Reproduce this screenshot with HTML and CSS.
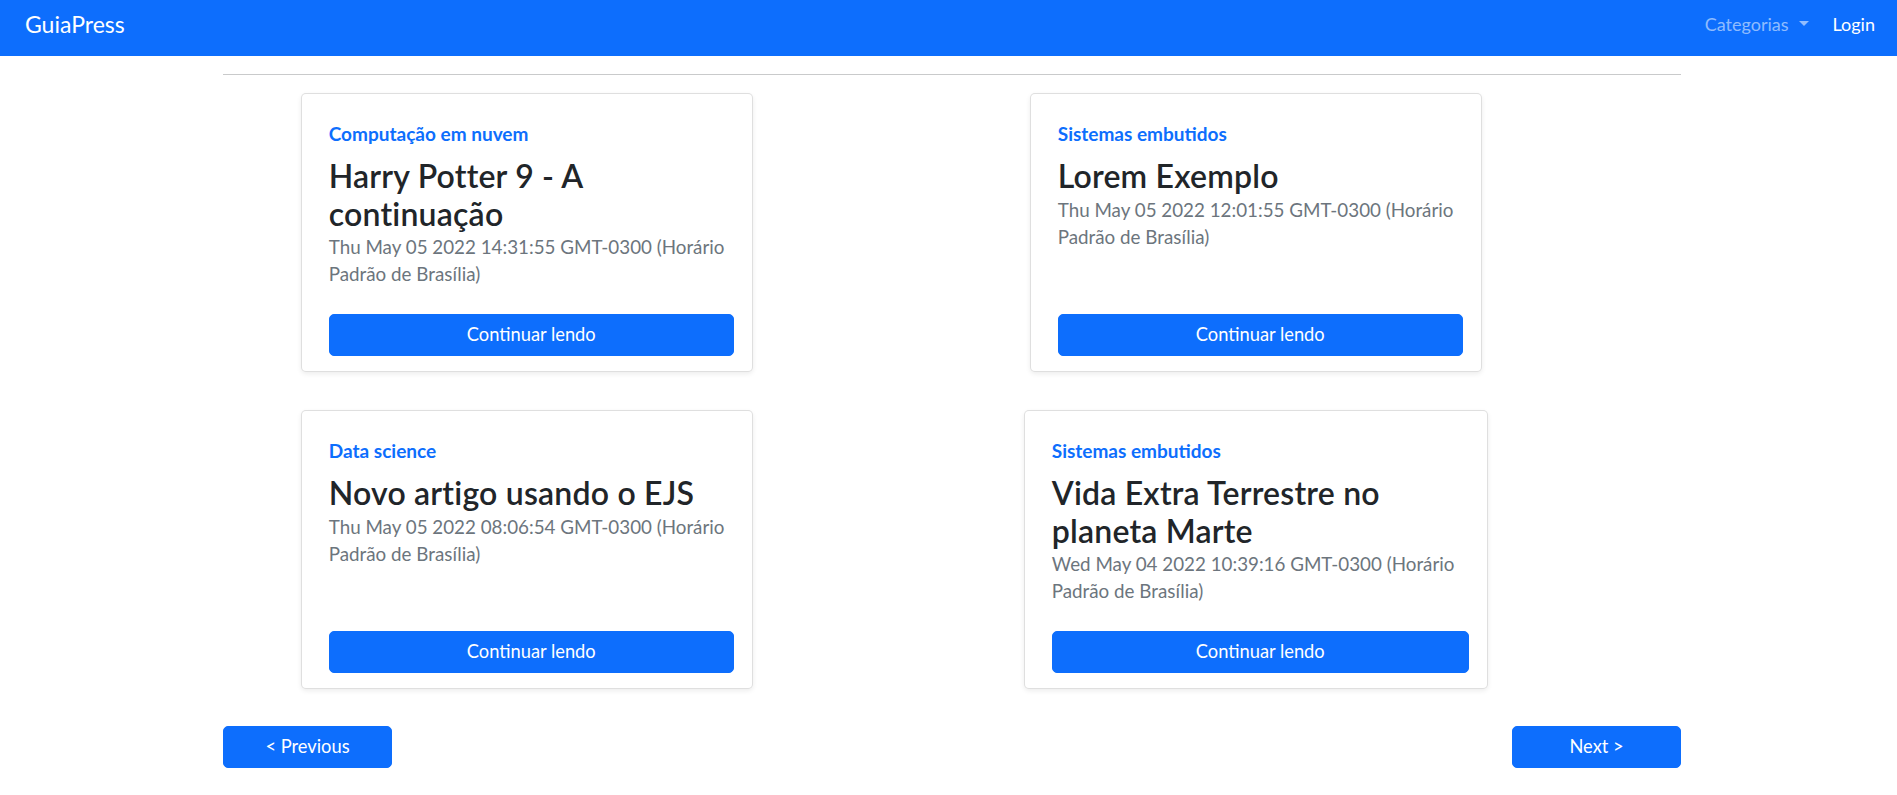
FILE: index.html
```html
<!DOCTYPE html>
<html lang="pt-BR">
<head>
<meta charset="utf-8">
<title>GuiaPress</title>
<link rel="stylesheet" href="styles.css">
</head>
<body>
<nav class="navbar">
  <a class="brand" href="#">GuiaPress</a>
  <ul class="nav-list">
    <li class="nav-item"><a class="nav-link nav-link-muted" href="#">Categorias<span class="caret"></span></a></li>
    <li class="nav-item"><a class="nav-link nav-link-login" href="#">Login</a></li>
  </ul>
</nav>
<main class="container">
  <hr class="divider">
  <div class="card-grid">
    <article class="card">
      <div class="card-category">Computação em nuvem</div>
      <h3 class="card-title">Harry Potter 9 - A continuação</h3>
      <p class="card-date">Thu May 05 2022 14:31:55 GMT-0300 (Horário Padrão de Brasília)</p>
      <a class="btn btn-block" href="#">Continuar lendo</a>
    </article>
    <article class="card">
      <div class="card-category">Sistemas embutidos</div>
      <h3 class="card-title">Lorem Exemplo</h3>
      <p class="card-date">Thu May 05 2022 12:01:55 GMT-0300 (Horário Padrão de Brasília)</p>
      <a class="btn btn-block" href="#">Continuar lendo</a>
    </article>
    <article class="card">
      <div class="card-category">Data science</div>
      <h3 class="card-title">Novo artigo usando o EJS</h3>
      <p class="card-date">Thu May 05 2022 08:06:54 GMT-0300 (Horário Padrão de Brasília)</p>
      <a class="btn btn-block" href="#">Continuar lendo</a>
    </article>
    <article class="card card-wide">
      <div class="card-category">Sistemas embutidos</div>
      <h3 class="card-title">Vida Extra Terrestre no planeta Marte</h3>
      <p class="card-date">Wed May 04 2022 10:39:16 GMT-0300 (Horário Padrão de Brasília)</p>
      <a class="btn btn-block" href="#">Continuar lendo</a>
    </article>
  </div>
  <div class="pager">
    <a class="btn btn-pager" href="#">&lt; Previous</a>
    <a class="btn btn-pager" href="#">Next &gt;</a>
  </div>
</main>
</body>
</html>
```

FILE: styles.css
```css
* {
  box-sizing: border-box;
}

html, body {
  margin: 0;
  padding: 0;
  background: #ffffff;
}

body {
  font-family: Lato, "Open Sans", sans-serif;
  color: #212529;
  font-size: 19px;
  line-height: 1.5;
}

a {
  text-decoration: none;
}

/* ---------- navbar ---------- */
.navbar {
  display: flex;
  justify-content: space-between;
  align-items: flex-start;
  height: 56px;
  padding: 0 22px 0 25px;
  background: #0d6efd;
}

.brand {
  padding-top: 6px;
  font-size: 23px;
  line-height: 36px;
  color: #ffffff;
}

.nav-list {
  display: flex;
  margin: 0;
  padding: 11px 0 0 0;
  list-style: none;
}

.nav-link {
  display: block;
  font-size: 18px;
  line-height: 26px;
  color: #ffffff;
}

.nav-link-muted {
  color: rgba(255, 255, 255, 0.55);
}

.nav-link-login {
  margin-left: 24px;
}

.caret {
  display: inline-block;
  margin-left: 10px;
  vertical-align: 0.255em;
  border-top: 5px solid rgba(255, 255, 255, 0.55);
  border-left: 5px solid transparent;
  border-right: 5px solid transparent;
}

/* ---------- main ---------- */
.container {
  width: 1458px;
  margin-left: 223px;
}

.divider {
  margin: 18px 0 0 0;
  border: 0;
  border-top: 1px solid #c9cacb;
  height: 0;
}

.card-grid {
  display: grid;
  grid-template-columns: 607.5px 607.5px;
  column-gap: 121.5px;
  row-gap: 38px;
  margin-top: 18px;
}

.card {
  justify-self: center;
  display: flex;
  flex-direction: column;
  width: 452px;
  padding: 26px 18px 15px 27px;
  background: #ffffff;
  border: 1px solid rgba(0, 0, 0, 0.125);
  border-radius: 5px;
  box-shadow: 0 2px 5px rgba(0, 0, 0, 0.075);
}

.card-wide {
  width: 464px;
}

.card-category {
  font-size: 19px;
  line-height: 28px;
  font-weight: 700;
  color: #0d6efd;
}

.card-title {
  margin: 9px 0 1px 0;
  font-size: 32px;
  line-height: 37.5px;
  font-weight: 600;
  letter-spacing: 0.2px;
  color: #212529;
}

.card-date {
  margin: 0 0 27px 0;
  font-size: 18.8px;
  line-height: 27px;
  color: #6c757d;
}

.btn {
  display: flex;
  align-items: center;
  justify-content: center;
  height: 42px;
  background: #0d6efd;
  border: 1px solid #0d6efd;
  border-radius: 5px;
  color: #ffffff;
  font-size: 18.3px;
}

.btn-block {
  margin-top: auto;
  width: 100%;
}

.pager {
  display: flex;
  justify-content: space-between;
  margin-top: 37px;
}

.btn-pager {
  width: 169px;
}
```
